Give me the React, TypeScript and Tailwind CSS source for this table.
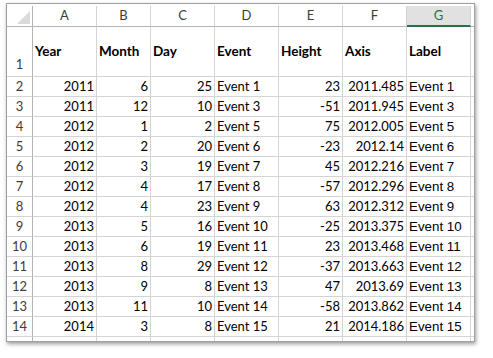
import React from "react";

const rows: [number, number, number, string, number, string, string][] = [
  [2011, 6, 25, "Event 1", 23, "2011.485", "Event 1"],
  [2011, 12, 10, "Event 3", -51, "2011.945", "Event 3"],
  [2012, 1, 2, "Event 5", 75, "2012.005", "Event 5"],
  [2012, 2, 20, "Event 6", -23, "2012.14", "Event 6"],
  [2012, 3, 19, "Event 7", 45, "2012.216", "Event 7"],
  [2012, 4, 17, "Event 8", -57, "2012.296", "Event 8"],
  [2012, 4, 23, "Event 9", 63, "2012.312", "Event 9"],
  [2013, 5, 16, "Event 10", -25, "2013.375", "Event 10"],
  [2013, 6, 19, "Event 11", 23, "2013.468", "Event 11"],
  [2013, 8, 29, "Event 12", -37, "2013.663", "Event 12"],
  [2013, 9, 8, "Event 13", 47, "2013.69", "Event 13"],
  [2013, 11, 10, "Event 14", -58, "2013.862", "Event 14"],
  [2014, 3, 8, "Event 15", 21, "2014.186", "Event 15"],
];

const letters = ["A", "B", "C", "D", "E", "F"];
const headers = ["Year", "Month", "Day", "Event", "Height", "Axis", "Label"];

const cal = "font-['Lato','Open_Sans',sans-serif]";
const ari = "font-['Liberation_Sans','Arial',sans-serif]";

function Cell({
  children,
  className = "",
}: {
  children?: React.ReactNode;
  className?: string;
}) {
  return (
    <div className={`border-r border-b border-[#d4d4d4] flex items-center overflow-visible whitespace-nowrap ${className}`}>
      {children}
    </div>
  );
}

export default function App() {
  return (
    <div className="w-[493px] h-[358px] bg-white">
      <div className="ml-[6px] mt-[3px] w-[469px] h-[339px] border border-[#a0a0a0] shadow-[1px_2px_4px_rgba(0,0,0,0.4)] overflow-hidden pt-[2px] bg-white">
        <div className={`grid grid-cols-[26px_64px_54px_64px_64px_64px_64px_64px_3px] text-[13px] text-black ${cal}`}>
          {/* Column header row */}
          <div className="h-[21px] border-r border-b border-[#b4b4b4] flex items-end justify-end pr-[2px] pb-[2px]">
            <svg width="13" height="13" viewBox="0 0 13 13">
              <polygon points="13,0 13,13 0,13" fill="#dadada" />
            </svg>
          </div>
          {letters.map((l) => (
            <div
              key={l}
              className="h-[21px] border-r border-b border-r-[#d4d4d4] border-b-[#b4b4b4] flex items-center justify-center text-[#3c3c3c]"
            >
              {l}
            </div>
          ))}
          <div className="h-[21px] border-r border-r-[#d4d4d4] border-b-2 border-b-[#217346] bg-[#e1e1e1] flex items-center justify-center text-[#217346]">
            G
          </div>
          <div className="h-[21px] border-b border-[#b4b4b4]" />

          {/* Row 1 */}
          <div className="h-[50px] border-r border-b border-r-[#b4b4b4] border-b-[#d4d4d4] flex items-end justify-center pb-[2px] text-[#3c3c3c]">
            1
          </div>
          {headers.map((h) => (
            <Cell key={h} className="h-[50px] pl-[2px] font-bold text-[13.5px]">
              {h}
            </Cell>
          ))}
          <div className="h-[50px] border-b border-[#d4d4d4]" />

          {/* Data rows */}
          {rows.map((r, i) => (
            <React.Fragment key={i}>
              <div className="h-[20px] border-r border-b border-r-[#b4b4b4] border-b-[#d4d4d4] flex items-center justify-center text-[#3c3c3c]">
                {i + 2}
              </div>
              <Cell className="h-[20px] justify-end pr-[2px]">{r[0]}</Cell>
              <Cell className="h-[20px] justify-end pr-[2px]">{r[1]}</Cell>
              <Cell className="h-[20px] justify-end pr-[2px]">{r[2]}</Cell>
              <Cell className="h-[20px] pl-[2px]">{r[3]}</Cell>
              <Cell className="h-[20px] justify-end pr-[2px]">{r[4]}</Cell>
              <Cell className="h-[20px] justify-end pr-[2px]">{r[5]}</Cell>
              <Cell className={`h-[20px] pl-[2px] text-[13.33px] ${ari}`}>{r[6]}</Cell>
              <div className="h-[20px] border-b border-[#d4d4d4]" />
            </React.Fragment>
          ))}

          {/* Partial row 15 */}
          <div className="h-[4px] border-r border-[#b4b4b4]" />
          {[0, 1, 2, 3, 4, 5, 6].map((k) => (
            <div key={k} className="h-[4px] border-r border-[#d4d4d4]" />
          ))}
          <div className="h-[4px]" />
        </div>
      </div>
    </div>
  );
}
